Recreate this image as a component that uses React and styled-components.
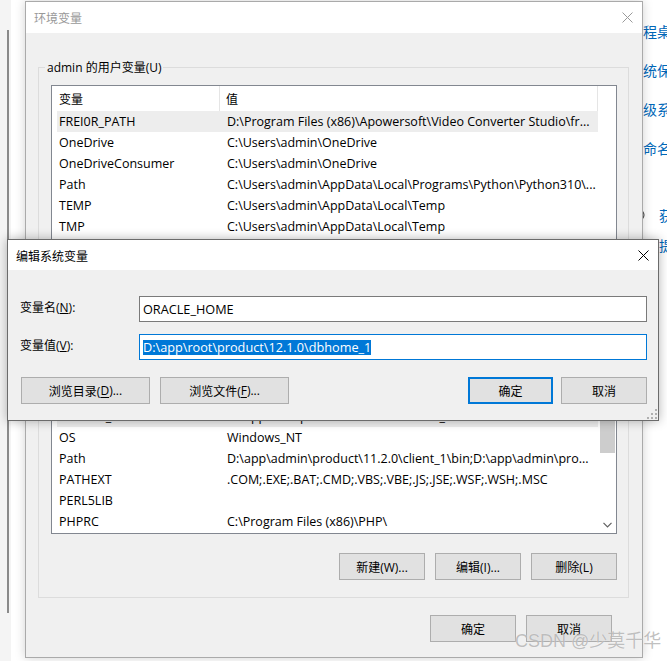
import React from "react";
import styled, { createGlobalStyle } from "styled-components";

const uiFont = `"Open Sans", "Noto Sans CJK SC", sans-serif`;

const GlobalStyle = createGlobalStyle`
  html, body {
    margin: 0;
    padding: 0;
  }
  body {
    font-family: ${uiFont};
    font-size: 12px;
    color: #000;
    background: #fff;
  }
`;

const Desktop = styled.div`
  position: relative;
  width: 667px;
  height: 661px;
  overflow: hidden;
  display: flex;
  background: #fff;
`;

const SideStrip = styled.div`
  width: 25px;
  flex-shrink: 0;
  padding-top: 30px;
  box-sizing: border-box;
  background: linear-gradient(to right, #f4f4f4 0 11px, #fff 11px);
`;

const SideRule = styled.div`
  margin-left: 7px;
  width: 2px;
  height: 583px;
  background: #8a8a8a;
`;

const Spacer = styled.div`
  flex: 1;
`;

const RelatedPanel = styled.div`
  width: 38px;
  flex-shrink: 0;
  overflow: hidden;
  padding-top: 21px;
  display: flex;
  flex-direction: column;
  gap: 19px;
  white-space: nowrap;
  font-family: "Noto Sans CJK SC", sans-serif;
  font-size: 14px;
  line-height: 20px;
  color: #0067b8;
`;

const RelatedLink = styled.div``;

const HelpList = styled.div`
  margin-top: 28px;
  display: flex;
  flex-direction: column;
  gap: 10px;
`;

const HelpRow = styled.div`
  display: flex;
  align-items: center;
  gap: 14px;
  padding-left: 2px;

  svg,
  span {
    flex-shrink: 0;
  }
`;

const Window = styled.div`
  position: absolute;
  left: ${({ $x }) => $x}px;
  top: ${({ $y }) => $y}px;
  width: ${({ $w }) => $w}px;
  height: ${({ $h }) => $h}px;
  box-sizing: border-box;
  display: flex;
  flex-direction: column;
  background: #f0f0f0;
  border: 1px solid ${({ $active }) => ($active ? "#6b6b6b" : "#aaaaaa")};
  box-shadow: 0 0 10px rgba(0, 0, 0, ${({ $active }) => ($active ? 0.3 : 0.18)});
  font-family: ${uiFont};
`;

const TitleBar = styled.div`
  height: ${({ $h }) => $h}px;
  flex-shrink: 0;
  display: flex;
  align-items: center;
  background: #fff;
  padding-left: ${({ $pad }) => $pad}px;
`;

const TitleText = styled.div`
  flex: 1;
  font-family: "Noto Sans CJK SC", sans-serif;
  font-size: 12px;
  color: ${({ $active }) => ($active ? "#000" : "#999")};
`;

const CloseButton = styled.div`
  width: 30px;
  height: 100%;
  display: flex;
  align-items: center;
  justify-content: center;
`;

const WindowBody = styled.div`
  flex: 1;
  display: flex;
  flex-direction: column;
  padding: 26px 13px 15px 12px;
`;

const GroupBox = styled.fieldset`
  margin: 0 0 ${({ $gap }) => $gap || 0}px;
  padding: 9px 11px 17px 12px;
  border: 1px solid #dcdcdc;
  min-width: 0;
`;

const GroupLegend = styled.legend`
  margin-left: -6px;
  padding: 0 2px;
  font-size: 12px;
  line-height: 17px;
`;

const ListBox = styled.div`
  height: ${({ $h }) => $h}px;
  box-sizing: border-box;
  border: 1px solid #828790;
  background: #fff;
  display: flex;
  overflow: hidden;
`;

const ListTable = styled.div`
  flex: 1;
  padding-left: 5px;
  min-width: 0;
`;

const HeaderRow = styled.div`
  display: flex;
  height: 25px;
  align-items: center;
  border-right: 1px solid #e5e5e5;
  font-family: "Noto Sans CJK SC", sans-serif;
`;

const HeaderCell = styled.div`
  height: 100%;
  display: flex;
  align-items: center;
  box-sizing: border-box;
  padding-left: ${({ $pad }) => $pad}px;
  ${({ $w }) => ($w ? `width: ${$w}px; border-right: 1px solid #e5e5e5;` : "flex: 1;")}
`;

const ListRow = styled.div`
  display: flex;
  height: 21px;
  align-items: center;
  background: ${({ $selected }) => ($selected ? "#ededed" : "transparent")};
  white-space: nowrap;
  font-size: 12.5px;
`;

const NameCell = styled.div`
  width: 163px;
  box-sizing: border-box;
  padding-left: 2px;
  overflow: hidden;
`;

const ValueCell = styled.div`
  flex: 1;
  padding-left: 7px;
  overflow: hidden;
`;

const ScrollTrack = styled.div`
  width: 18px;
  flex-shrink: 0;
  display: flex;
  flex-direction: column;
  padding: 17px 1px 0 2px;
  box-sizing: border-box;
`;

const ScrollThumb = styled.div`
  height: ${({ $h }) => $h}px;
  background: #cdcdcd;
`;

const ScrollArrow = styled.div`
  margin-top: auto;
  height: 17px;
  display: flex;
  align-items: center;
  justify-content: center;
`;

const ButtonRow = styled.div`
  display: flex;
  justify-content: flex-end;
  gap: 10px;
  margin-top: ${({ $top }) => $top || 0}px;
`;

const Button = styled.div`
  width: ${({ $w }) => $w || 86}px;
  height: 27px;
  box-sizing: border-box;
  display: flex;
  align-items: center;
  justify-content: center;
  background: #e1e1e1;
  border: ${({ $primary }) => ($primary ? "2px solid #0078d7" : "1px solid #adadad")};
  font-size: 12px;
  white-space: nowrap;

  u {
    text-underline-offset: 2px;
  }
`;

const Footer = styled.div`
  margin-top: auto;
  display: flex;
  justify-content: flex-end;
  gap: 10px;
  padding-right: 17px;
`;

const DialogBody = styled.div`
  flex: 1;
  display: flex;
  flex-direction: column;
  padding: 26px 11px 0 12px;
`;

const FormRow = styled.div`
  display: flex;
  align-items: center;
  margin-bottom: 12px;
`;

const FieldLabel = styled.div`
  width: 119px;
  font-size: 12px;
  line-height: 16px;
  margin-top: -3px;

  u {
    text-underline-offset: 1px;
  }
`;

const TextField = styled.div`
  flex: 1;
  height: 26px;
  box-sizing: border-box;
  display: flex;
  align-items: center;
  padding-left: 3px;
  background: #fff;
  border: 1px solid ${({ $focused }) => ($focused ? "#0078d7" : "#7a7a7a")};
  font-size: 12.7px;
  white-space: nowrap;
`;

const Selection = styled.span`
  background: #0078d7;
  color: #fff;
  line-height: 15px;
`;

const DialogButtons = styled.div`
  margin-top: 5px;
  padding-left: 1px;
  display: flex;
  align-items: center;
`;

const ButtonGroup = styled.div`
  display: flex;
  gap: ${({ $gap }) => $gap}px;
  margin-left: ${({ $push }) => ($push ? "auto" : "0")};
`;

const ResizeGrip = styled.svg`
  position: absolute;
  right: 1px;
  bottom: 1px;
`;

const Watermark = styled.div`
  position: absolute;
  left: 515px;
  top: 630px;
  font-family: "Liberation Sans", "Noto Sans CJK SC", sans-serif;
  font-size: 18px;
  line-height: 22px;
  color: rgba(150, 150, 150, 0.6);
  text-shadow: 0 0 1px rgba(255, 255, 255, 0.8);
  white-space: nowrap;
`;

const userVars = [
  {
    name: "FREI0R_PATH",
    value: "D:\\Program Files (x86)\\Apowersoft\\Video Converter Studio\\fr...",
    selected: true,
  },
  { name: "OneDrive", value: "C:\\Users\\admin\\OneDrive" },
  { name: "OneDriveConsumer", value: "C:\\Users\\admin\\OneDrive" },
  {
    name: "Path",
    value: "C:\\Users\\admin\\AppData\\Local\\Programs\\Python\\Python310\\...",
  },
  { name: "TEMP", value: "C:\\Users\\admin\\AppData\\Local\\Temp" },
  { name: "TMP", value: "C:\\Users\\admin\\AppData\\Local\\Temp" },
];

const systemVars = [
  { name: "NLS_LANG", value: "SIMPLIFIED CHINESE_CHINA.ZHS16GBK" },
  { name: "NUMBER_OF_PROCESSORS", value: "8" },
  { name: "ORACLE_HOME", value: "D:\\app\\root\\product\\12.1.0\\dbhome_1", selected: true },
  { name: "OS", value: "Windows_NT" },
  {
    name: "Path",
    value: "D:\\app\\admin\\product\\11.2.0\\client_1\\bin;D:\\app\\admin\\pro...",
  },
  { name: "PATHEXT", value: ".COM;.EXE;.BAT;.CMD;.VBS;.VBE;.JS;.JSE;.WSF;.WSH;.MSC" },
  { name: "PERL5LIB", value: "" },
  { name: "PHPRC", value: "C:\\Program Files (x86)\\PHP\\" },
];

function CloseIcon({ color }) {
  return (
    <svg width="11" height="11" viewBox="0 0 11 11">
      <path d="M0.5 0.5 L10.5 10.5 M10.5 0.5 L0.5 10.5" stroke={color} strokeWidth="1" fill="none" />
    </svg>
  );
}

function HelpIcon() {
  return (
    <svg width="14" height="14" viewBox="0 0 14 14">
      <circle cx="7" cy="7" r="6" stroke="#333" strokeWidth="1" fill="none" />
      <path d="M7 3.5 V8 M7 9.5 V10.5" stroke="#333" strokeWidth="1.2" />
    </svg>
  );
}

function VarList({ rows, height, scroll }) {
  return (
    <ListBox $h={height}>
      <ListTable>
        <HeaderRow>
          <HeaderCell $w={163} $pad={2}>变量</HeaderCell>
          <HeaderCell $pad={6}>值</HeaderCell>
        </HeaderRow>
        {rows.map((row) => (
          <ListRow key={row.name} $selected={row.selected}>
            <NameCell>{row.name}</NameCell>
            <ValueCell>{row.value}</ValueCell>
          </ListRow>
        ))}
      </ListTable>
      <ScrollTrack>
        {scroll && <ScrollThumb $h={97} />}
        {scroll && (
          <ScrollArrow>
            <svg width="9" height="6" viewBox="0 0 9 6">
              <path d="M0.5 0.8 L4.5 4.8 L8.5 0.8" stroke="#606060" strokeWidth="1.2" fill="none" />
            </svg>
          </ScrollArrow>
        )}
      </ScrollTrack>
    </ListBox>
  );
}

export default function App() {
  return (
    <>
      <GlobalStyle />
      <Desktop>
        <SideStrip>
          <SideRule />
        </SideStrip>
        <Spacer />
        <RelatedPanel>
          <RelatedLink>远程桌面</RelatedLink>
          <RelatedLink>系统保护</RelatedLink>
          <RelatedLink>高级系统设置</RelatedLink>
          <RelatedLink>重命名这台电脑</RelatedLink>
          <HelpList>
            <HelpRow>
              <HelpIcon />
              <span>获取帮助</span>
            </HelpRow>
            <HelpRow>
              <HelpIcon />
              <span>提供反馈</span>
            </HelpRow>
          </HelpList>
        </RelatedPanel>

        <Window $x={25} $y={1} $w={618} $h={657}>
          <TitleBar $h={31} $pad={8}>
            <TitleText>环境变量</TitleText>
            <CloseButton>
              <CloseIcon color="#9a9a9a" />
            </CloseButton>
          </TitleBar>
          <WindowBody>
            <GroupBox $gap={5}>
              <GroupLegend>admin 的用户变量(U)</GroupLegend>
              <VarList rows={userVars} height={158} />
              <ButtonRow $top={19}>
                <Button>新建(N)...</Button>
                <Button>编辑(E)...</Button>
                <Button>删除(D)</Button>
              </ButtonRow>
            </GroupBox>
            <GroupBox>
              <GroupLegend>系统变量(S)</GroupLegend>
              <VarList rows={systemVars} height={196} scroll />
              <ButtonRow $top={19}>
                <Button>新建(W)...</Button>
                <Button>编辑(I)...</Button>
                <Button>删除(L)</Button>
              </ButtonRow>
            </GroupBox>
            <Footer>
              <Button>确定</Button>
              <Button>取消</Button>
            </Footer>
          </WindowBody>
        </Window>

        <Window $x={7} $y={239} $w={652} $h={182} $active>
          <TitleBar $h={30} $pad={8}>
            <TitleText $active>编辑系统变量</TitleText>
            <CloseButton>
              <CloseIcon color="#000" />
            </CloseButton>
          </TitleBar>
          <DialogBody>
            <FormRow>
              <FieldLabel>
                变量名(<u>N</u>):
              </FieldLabel>
              <TextField>ORACLE_HOME</TextField>
            </FormRow>
            <FormRow>
              <FieldLabel>
                变量值(<u>V</u>):
              </FieldLabel>
              <TextField $focused>
                <Selection>D:\app\root\product\12.1.0\dbhome_1</Selection>
              </TextField>
            </FormRow>
            <DialogButtons>
              <ButtonGroup $gap={10}>
                <Button $w={129}>
                  浏览目录(<u>D</u>)...
                </Button>
                <Button $w={129}>
                  浏览文件(<u>F</u>)...
                </Button>
              </ButtonGroup>
              <ButtonGroup $gap={8} $push>
                <Button $primary $w={85}>
                  确定
                </Button>
                <Button $w={86}>取消</Button>
              </ButtonGroup>
            </DialogButtons>
          </DialogBody>
          <ResizeGrip width="10" height="10" viewBox="0 0 10 10">
            <g fill="#b0b0b0">
              <rect x="8" y="0" width="2" height="2" />
              <rect x="4" y="4" width="2" height="2" />
              <rect x="8" y="4" width="2" height="2" />
              <rect x="0" y="8" width="2" height="2" />
              <rect x="4" y="8" width="2" height="2" />
              <rect x="8" y="8" width="2" height="2" />
            </g>
          </ResizeGrip>
        </Window>

        <Watermark>CSDN @少莫千华</Watermark>
      </Desktop>
    </>
  );
}
